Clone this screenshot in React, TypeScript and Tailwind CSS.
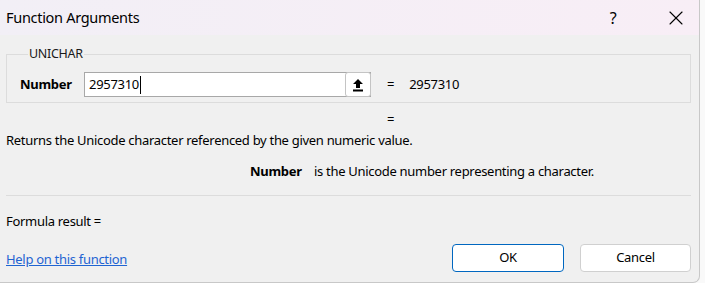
import { X } from 'lucide-react';

function ArrowUpIcon() {
  return (
    <svg width="12" height="14" viewBox="0 0 12 14">
      <path d="M6 1 L11 6 L8 6 L8 10 L4 10 L4 6 L1 6 Z" fill="#000" />
      <rect x="1" y="11.5" width="10" height="2" fill="#000" />
    </svg>
  );
}

function App() {
  const font = { fontFamily: '"Noto Sans", "Open Sans", sans-serif' };
  return (
    <div className="flex w-[705px] h-[283px] bg-[#f9f9f9]" style={font}>
      <div className="w-[700px] h-full bg-[#f0f0f0] border-r border-b border-[#c8c8c8] rounded-br-[7px] flex flex-col text-[13px] tracking-[-0.3px] text-black">
        <div className="h-[35px] shrink-0 flex items-center justify-between pl-[6px] bg-gradient-to-r from-[#f2eff6] to-[#f8eef6]">
          <span className="text-[14.5px] tracking-[-0.3px]">Function Arguments</span>
          <div className="flex items-center gap-[13px] mr-[-2px]">
            <span className="text-[16px] w-[50px] text-center">?</span>
            <span className="w-[50px] flex justify-center">
              <X size={24} strokeWidth={1.1} />
            </span>
          </div>
        </div>

        <div className="flex flex-col pl-[6px] pr-[8px]">
          <fieldset className="border border-[#dcdcdc] mt-[11px] pl-[8px] pr-0 pb-[5px]">
            <legend className="px-[1px] ml-[13px] text-[12.5px] leading-[16px] text-[#1a1a1a]">UNICHAR</legend>
            <div className="flex items-center mt-[10px] ml-[5px]">
              <span className="font-bold w-[64px]">Number</span>
              <div className="w-[287px] h-[25px] bg-white border border-[#a8a8a8] flex items-center justify-between pl-[4px]">
                <span className="flex items-center">
                  2957310<span className="inline-block w-px h-[18px] bg-black ml-px" />
                </span>
                <div className="w-[26px] h-[25px] -mr-px border border-[#c4c4c4] rounded-[3px] bg-white flex items-center justify-center">
                  <ArrowUpIcon />
                </div>
              </div>
              <span className="ml-[16px]">=</span>
              <span className="ml-[15px]">2957310</span>
            </div>
          </fieldset>

          <div className="leading-[16px] mt-[8px] pl-[381px]">=</div>
          <div className="leading-[16px] mt-[5px]">Returns the Unicode character referenced by the given numeric value.</div>
          <div className="leading-[16px] mt-[15px] flex pl-[244px]">
            <span className="font-bold w-[64px]">Number</span>
            <span>is the Unicode number representing a character.</span>
          </div>
          <div className="border-t border-[#dcdcdc] mt-[16px]" />
          <div className="leading-[16px] mt-[17px]">Formula result =</div>
          <div className="flex items-center justify-between mt-[15px]">
            <a className="text-[#1f64d2] underline mt-[4px]">Help on this function</a>
            <div className="flex gap-[16px]">
              <button className="w-[112px] h-[28px] bg-white border border-[#0067c0] rounded-[4px]">OK</button>
              <button className="w-[111px] h-[28px] bg-white border border-[#d0d0d0] rounded-[4px]">Cancel</button>
            </div>
          </div>
        </div>
      </div>
    </div>
  );
}

export default App;
